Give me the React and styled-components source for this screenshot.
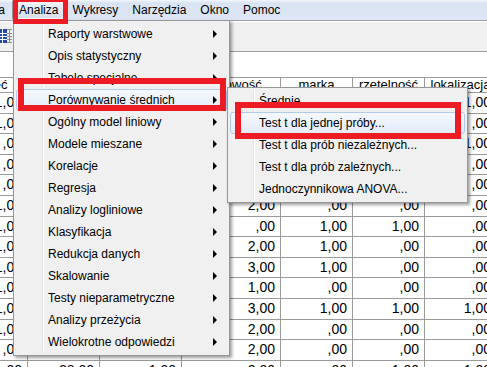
import React from 'react';
import styled, { createGlobalStyle, css } from 'styled-components';

const GlobalStyle = createGlobalStyle`
  html, body { margin: 0; padding: 0; background: #ffffff; }
`;

const FONT = `"Liberation Sans", Arial, sans-serif`;

const Screen = styled.div`
  position: relative;
  width: 487px;
  height: 367px;
  overflow: hidden;
  background: #ffffff;
  font-family: ${FONT};
  color: #000;
`;

/* ---------- menu bar ---------- */
const MenuBar = styled.div`
  height: 20px;
  display: flex;
  background: linear-gradient(#f3f6fb 0, #dae3f2 3px, #dde6f4 100%);
  overflow: hidden;
`;

const MenuTrack = styled.div`
  display: flex;
  margin-left: -86px;
`;

const BarItem = styled.div`
  box-sizing: border-box;
  height: 20px;
  padding: 0 7px;
  line-height: 20px;
  font-size: 12px;
  white-space: nowrap;
  border-radius: 2px;
  ${(p) =>
    p.$open &&
    css`
      background: linear-gradient(#f1f3f7, #d6dde8);
      box-shadow: inset 0 0 0 1px #8f9399, inset 0 0 0 2px rgba(255, 255, 255, 0.75);
    `}
`;

/* ---------- toolbar ---------- */
const Toolbar = styled.div`
  box-sizing: border-box;
  height: 32px;
  background: #f0f0f0;
  border-top: 1px solid #a0a0a0;
  border-bottom: 1px solid #a0a0a0;
  box-shadow: inset 0 1px 0 #ffffff;
  display: flex;
  align-items: center;
`;

const ToolIcon = styled.svg`
  margin-left: -4px;
  display: block;
`;

const EditBar = styled.div`
  height: 25px;
  background: #ffffff;
`;

/* ---------- data sheet ---------- */
const Sheet = styled.div`
  margin-left: -36px;
  border-top: 1px solid #9a9a9a;
`;

const SheetRow = styled.div`
  display: grid;
  grid-template-columns: 64px 72px 82px 99px 72px 72px 72px;
  height: ${(p) => (p.$header ? '15px' : '20.6px')};
`;

const Cell = styled.div`
  box-sizing: border-box;
  border-right: 1px solid #9a9a9a;
  border-bottom: 1px solid #9a9a9a;
  overflow: hidden;
  white-space: nowrap;
  ${(p) =>
    p.$header
      ? css`
          font-size: 13px;
          line-height: 14px;
          text-align: center;
          background: #ffffff;
        `
      : css`
          font-size: 14px;
          line-height: 18px;
          text-align: right;
          padding-right: 5px;
        `}
`;

/* ---------- drop-down menus ---------- */
const Popup = styled.div`
  position: absolute;
  left: ${(p) => p.$x}px;
  top: ${(p) => p.$y}px;
  width: ${(p) => p.$w}px;
  box-sizing: border-box;
  padding: 2px;
  background: #f0f0f0;
  border: 1px solid #979797;
  box-shadow: 2px 2px 3px rgba(0, 0, 0, 0.38);
  z-index: ${(p) => p.$z};

  &::before {
    content: '';
    position: absolute;
    top: 2px;
    bottom: 2px;
    left: ${(p) => p.$gutter}px;
    width: 1px;
    background: #e2e3e3;
    border-right: 1px solid #ffffff;
  }
`;

const PopItem = styled.div`
  position: relative;
  box-sizing: border-box;
  height: 22px;
  display: flex;
  align-items: center;
  justify-content: space-between;
  padding-left: ${(p) => p.$indent}px;
  padding-right: 9px;
  font-size: 12px;
  white-space: nowrap;
  border: 1px solid transparent;
  border-radius: 3px;
  ${(p) =>
    p.$hot &&
    css`
      border-color: #b3cbea;
      background: linear-gradient(#f5f8fd, #e4ecf8);
    `}
`;

const Arrow = styled.span`
  width: 0;
  height: 0;
  border-left: 4px solid #000;
  border-top: 4px solid transparent;
  border-bottom: 4px solid transparent;
`;

const Callout = styled.div`
  position: absolute;
  box-sizing: border-box;
  left: ${(p) => p.$x}px;
  top: ${(p) => p.$y}px;
  width: ${(p) => p.$w}px;
  height: ${(p) => p.$h}px;
  border: ${(p) => p.$t}px solid #ed1c24;
  z-index: 10;
`;

/* ---------- data ---------- */
const barItems = ['Przekształcenia', 'Analiza', 'Wykresy', 'Narzędzia', 'Okno', 'Pomoc'];

const mainItems = [
  'Raporty warstwowe',
  'Opis statystyczny',
  'Tabele specjalne',
  'Porównywanie średnich',
  'Ogólny model liniowy',
  'Modele mieszane',
  'Korelacje',
  'Regresja',
  'Analizy logliniowe',
  'Klasyfikacja',
  'Redukcja danych',
  'Skalowanie',
  'Testy nieparametryczne',
  'Analizy przeżycia',
  'Wielokrotne odpowiedzi',
];

const subItems = [
  'Średnie',
  'Test t dla jednej próby...',
  'Test t dla prób niezależnych...',
  'Test t dla prób zależnych...',
  'Jednoczynnikowa ANOVA...',
];

const headers = ['płeć', 'wiek', 'staż', 'fachowość', 'marka', 'rzetelność', 'lokalizacja'];

const colA = [1, 1, 0, 0, 0, 1, 1, 1, 1, 1, 1, 1, 0, 0];
const colB = [34, 27, 45, 52, 23, 31, 40, 29, 36, 48, 26, 33, 41, 28];
const colC = [1, 2, 1, 2, 1, 1, 2, 1, 1, 2, 1, 1, 2, 1];
const colD = [2, 1, 3, 2, 3, 2, 0, 2, 3, 1, 3, 2, 2, 2];
const colE = [1, 0, 1, 0, 0, 0, 1, 1, 1, 0, 1, 0, 0, 0];
const colF = [0, 1, 0, 1, 1, 0, 1, 0, 0, 0, 1, 0, 0, 1];
const colG = [1, 0, 1, 0, 0, 0, 0, 0, 0, 0, 1, 0, 0, 1];

const fmt = (v) => (v === 0 ? ',00' : `${v},00`);

const rows = colA.map((_, i) => [colA[i], colB[i], colC[i], colD[i], colE[i], colF[i], colG[i]]);

export default function App() {
  return (
    <>
      <GlobalStyle />
      <Screen>
        <MenuBar>
          <MenuTrack>
            {barItems.map((m) => (
              <BarItem key={m} $open={m === 'Analiza'}>
                {m}
              </BarItem>
            ))}
          </MenuTrack>
        </MenuBar>

        <Toolbar>
          <ToolIcon width="16" height="14" viewBox="0 0 16 14">
            <rect x="0" y="0" width="11" height="14" fill="#2349a3" />
            <path d="M0 4.5H11M0 7.5H11M0 10.5H11M6.5 0V14" stroke="#ffffff" strokeWidth="1" />
            <path d="M11 0.5H16M11 4.5H16M11 7.5H16M11 10.5H16M11 13.5H16M13.5 0V14" stroke="#8c8c8c" strokeWidth="1" />
          </ToolIcon>
        </Toolbar>

        <EditBar />

        <Sheet>
          <SheetRow $header>
            {headers.map((h) => (
              <Cell key={h} $header>
                {h}
              </Cell>
            ))}
          </SheetRow>
          {rows.map((r, i) => (
            <SheetRow key={i}>
              {r.map((v, j) => (
                <Cell key={j}>{fmt(v)}</Cell>
              ))}
            </SheetRow>
          ))}
        </Sheet>

        <Popup $x={13} $y={20} $w={217} $gutter={28} $z={3}>
          {mainItems.map((m) => (
            <PopItem key={m} $indent={31} $hot={m === 'Porównywanie średnich'}>
              <span>{m}</span>
              <Arrow />
            </PopItem>
          ))}
        </Popup>

        <Popup $x={227} $y={87} $w={241} $gutter={25} $z={4}>
          {subItems.map((m) => (
            <PopItem key={m} $indent={28} $hot={m === 'Test t dla jednej próby...'}>
              <span>{m}</span>
            </PopItem>
          ))}
        </Popup>

        <Callout $x={13} $y={-3} $w={55} $h={27} $t={5} />
        <Callout $x={18} $y={78} $w={208} $h={33} $t={6} />
        <Callout $x={235} $y={102} $w={226} $h={37} $t={6} />
      </Screen>
    </>
  );
}
